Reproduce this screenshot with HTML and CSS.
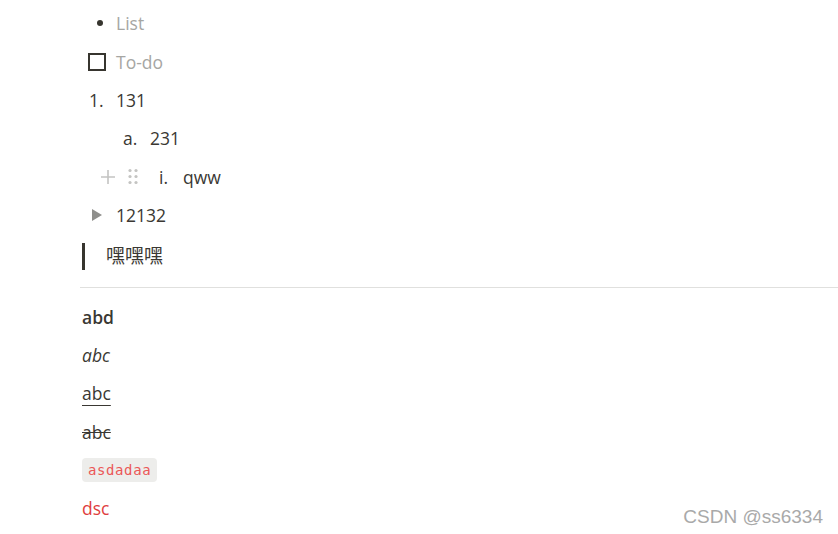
FILE: index.html
```html
<!DOCTYPE html>
<html lang="zh-CN">
<head>
    <meta charset="UTF-8">
    <title>Editor blocks</title>
    <link rel="stylesheet" href="styles.css">
</head>
<body>
    <div class="page">
        <div class="row">
            <span class="marker"><span class="dot"></span></span>
            <span class="placeholder">List</span>
        </div>
        <div class="row">
            <span class="marker"><span class="box"></span></span>
            <span class="placeholder">To-do</span>
        </div>
        <div class="row">
            <span class="marker num">1.</span>
            <span>131</span>
        </div>
        <div class="row indent-1">
            <span class="marker num">a.</span>
            <span>231</span>
        </div>
        <div class="row indent-2">
            <div class="handles">
                <svg width="16" height="16" viewBox="0 0 16 16">
                    <path d="M8 1v14M1 8h14" stroke="#c4c4c2" stroke-width="1.6" fill="none"/>
                </svg>
                <svg width="10" height="17" viewBox="0 0 10 17">
                    <g fill="#c4c4c2">
                        <circle cx="2" cy="2.5" r="1.6"/><circle cx="8" cy="2.5" r="1.6"/>
                        <circle cx="2" cy="8.5" r="1.6"/><circle cx="8" cy="8.5" r="1.6"/>
                        <circle cx="2" cy="14.5" r="1.6"/><circle cx="8" cy="14.5" r="1.6"/>
                    </g>
                </svg>
            </div>
            <span class="marker num roman">i.</span>
            <span>qww</span>
        </div>
        <div class="row">
            <span class="marker"><span class="tri"></span></span>
            <span>12132</span>
        </div>
        <div class="quote">嘿嘿嘿</div>
        <hr class="divider">
        <div class="row plain"><b>abd</b></div>
        <div class="row plain"><i>abc</i></div>
        <div class="row plain"><span class="under">abc</span></div>
        <div class="row plain"><s>abc</s></div>
        <div class="row plain"><code class="code">asdadaa</code></div>
        <div class="row plain"><span class="red">dsc</span></div>
    </div>
    <div class="watermark">CSDN @ss6334</div>
</body>
</html>
```

FILE: styles.css
```css
* {
    margin: 0;
    padding: 0;
    box-sizing: border-box;
}

body {
    font-family: "Open Sans", "Noto Sans", "Noto Sans CJK SC", sans-serif;
    font-size: 17.5px;
    color: #3a3833;
    background: white;
    width: 838px;
    height: 534px;
    overflow: hidden;
    position: relative;
}

.page {
    padding: 4px 0 0 82px;
}

.row {
    display: flex;
    align-items: center;
    height: 38.4px;
}

.marker {
    width: 34px;
    display: flex;
    align-items: center;
    justify-content: center;
    padding-left: 2px;
}

.num {
    justify-content: flex-start;
    padding-left: 7px;
}

.roman {
    width: 31px;
}

.indent-1 {
    padding-left: 34px;
}

.indent-2 {
    padding-left: 70px;
}

.handles {
    display: flex;
    align-items: center;
    gap: 12px;
    margin-left: -52px;
    margin-right: 14px;
}

.dot {
    width: 6px;
    height: 6px;
    border-radius: 50%;
    background: #37352f;
}

.box {
    width: 18px;
    height: 18px;
    border: 2px solid #37352f;
    margin-left: -6px;
}

.tri {
    width: 0;
    height: 0;
    border-top: 6px solid transparent;
    border-bottom: 6px solid transparent;
    border-left: 10px solid #8f8f8c;
    margin-left: -6px;
}

.placeholder {
    color: #a6a6a3;
}

.quote {
    margin-top: 9px;
    border-left: 3px solid #37352f;
    padding-left: 21px;
    height: 27px;
    line-height: 27px;
    font-size: 19px;
}

.divider {
    border: none;
    border-top: 1px solid #e0e0de;
    margin: 17px 0 9px -2px;
}

.plain b {
    font-weight: 600;
}

.under {
    text-decoration: underline;
    text-underline-offset: 5px;
    text-decoration-thickness: 1px;
}

.code {
    font-family: "DejaVu Sans Mono", "Liberation Mono", monospace;
    font-size: 14px;
    letter-spacing: 0.6px;
    color: #eb5757;
    background: #ededeb;
    border-radius: 4px;
    padding: 4px 6px;
}

.red {
    color: #e03e3e;
}

.watermark {
    position: absolute;
    right: 15px;
    bottom: 6px;
    font-family: "Liberation Sans", Arial, sans-serif;
    font-size: 19px;
    color: #a9a9a9;
    text-shadow: 0 0 1px #fff;
}
```
